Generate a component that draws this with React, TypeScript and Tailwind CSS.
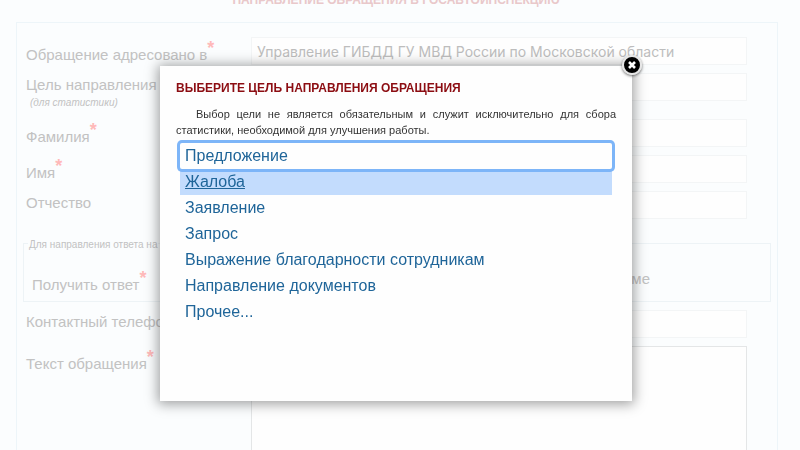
import { useState } from 'react';

const goals = [
    'Предложение',
    'Жалоба',
    'Заявление',
    'Запрос',
    'Выражение благодарности сотрудникам',
    'Направление документов',
    'Прочее...',
];

const inputClass = "block h-7 w-full border border-[#f3f5f6] bg-[#fefefe] px-[5px] font-['Inter','Liberation_Sans',sans-serif] text-sm text-[#bdbdbd] outline-none";

type LabelProps = { id: string; text: string; required?: boolean; hint?: string };

const Label = ({ id, text, required, hint }: LabelProps) => (
    <label htmlFor={id} className={`block w-[225px] shrink-0 whitespace-nowrap text-[15px] leading-5 ${required ? 'pt-2' : 'pt-0.5'}`}>
        {text}
        {required && <span className="inline-block h-5 align-top text-lg leading-none font-bold text-[#ffb9b9] -mt-1.5">*</span>}
        {hint && <span className="block pl-1 text-[10px] leading-4 italic">{hint}</span>}
    </label>
);

const Field = ({ id, text, required, hint, value }: LabelProps & { value?: string }) => (
    <div className="flex items-start">
        <Label id={id} text={text} required={required} hint={hint} />
        <div className="flex-1">
            <input id={id} type="text" defaultValue={value} className={inputClass} />
        </div>
    </div>
);

const CloseIcon = () => (
    <svg viewBox="0 0 20 20" className="size-5">
        <circle cx="10" cy="10" r="9" fill="#000" stroke="#e6e6e6" strokeWidth="2" />
        <path d="M7 7l6 6M13 7l-6 6" stroke="#fff" strokeWidth="2.6" />
    </svg>
);

const GoalDialog = ({ onClose }: { onClose: () => void }) => {
    const [selected, setSelected] = useState('Предложение');

    return (
        <div className="fixed inset-0 flex items-start justify-center pt-[66px] pr-2">
            <div role="dialog" aria-labelledby="goal-title" className="relative min-h-[335px] w-full max-w-[472px] bg-[#fefefe] px-4 pt-3.5 shadow-[0_1px_12px_2px_rgba(0,0,0,0.38)]">
                <button type="button" aria-label="Закрыть" onClick={onClose} className="absolute -top-[11px] -right-[10px] rounded-full shadow-[0_1px_3px_rgba(0,0,0,0.6)]">
                    <CloseIcon />
                </button>
                <h2 id="goal-title" className="text-xs leading-4 font-bold text-[#8c0d12]">ВЫБЕРИТЕ ЦЕЛЬ НАПРАВЛЕНИЯ ОБРАЩЕНИЯ</h2>
                <p className="mt-2.5 indent-5 text-justify text-[11px] leading-4 text-[#333]">
                    Выбор цели не является обязательным и служит исключительно для сбора статистики, необходимой для улучшения работы.
                </p>
                <ul className="mt-[5px] px-1 text-base leading-[26px] text-[#1f6599]">
                    {goals.map((goal) => (
                        <li key={goal}>
                            <button
                                type="button"
                                onClick={() => setSelected(goal)}
                                className={`block w-full px-[5px] text-left outline-none hover:bg-[#c3dcfd] hover:underline ${goal === selected ? 'relative rounded-xs ring-3 ring-[#7db5f8]' : ''} ${goal === 'Жалоба' ? 'bg-[#c3dcfd] underline' : ''}`}>
                                {goal}
                            </button>
                        </li>
                    ))}
                </ul>
            </div>
        </div>
    );
};

const App = () => {
    const [open, setOpen] = useState(true);

    return (
        <div className="h-screen overflow-hidden bg-[#fbfdfe] font-['Liberation_Sans',Arial,sans-serif] text-[#c2c2c2]">
            <h1 className="-mt-2 pr-2 text-center text-xs leading-4 font-bold text-[#e9c8ca]">НАПРАВЛЕНИЕ ОБРАЩЕНИЯ В ГОСАВТОИНСПЕКЦИЮ</h1>
            <form className="mt-3.5 mr-[22px] ml-4 border border-[#edf5f9] bg-[#fbfdfe] pt-3.5">
                <div className="flex flex-col gap-2 pr-[30px] pl-[9px]">
                    <Field id="addressee" text="Обращение адресовано в" required value="Управление ГИБДД ГУ МВД России по Московской области" />
                    <Field id="goal" text="Цель направления" hint="(для статистики)" />
                    <Field id="surname" text="Фамилия" required />
                    <Field id="name" text="Имя" required />
                    <Field id="patronymic" text="Отчество" />
                </div>
                <fieldset className="mx-1.5 mt-3.5 border border-[#edf3f6] px-2 pb-1.5">
                    <legend className="-ml-1 px-px pt-1 text-[10px] leading-4">Для направления ответа на</legend>
                    <div className="flex items-start justify-between pt-3.5 pr-[112px]">
                        <Label id="answer" text="Получить ответ" required />
                        <label className="pt-0.5 text-[15px] leading-5">
                            <input id="answer" type="radio" name="answer" className="mr-1" />
                            форме
                        </label>
                    </div>
                </fieldset>
                <div className="mt-2 flex flex-col gap-2 pr-[30px] pl-[9px]">
                    <Field id="phone" text="Контактный телефон" />
                    <div className="flex items-start">
                        <Label id="message" text="Текст обращения" required />
                        <textarea id="message" rows={8} className="block flex-1 resize-none border border-[#e4e6e7] bg-[#fefefe] p-1 text-[15px] outline-none" />
                    </div>
                </div>
            </form>
            {open && <GoalDialog onClose={() => setOpen(false)} />}
        </div>
    );
};
export default App;
